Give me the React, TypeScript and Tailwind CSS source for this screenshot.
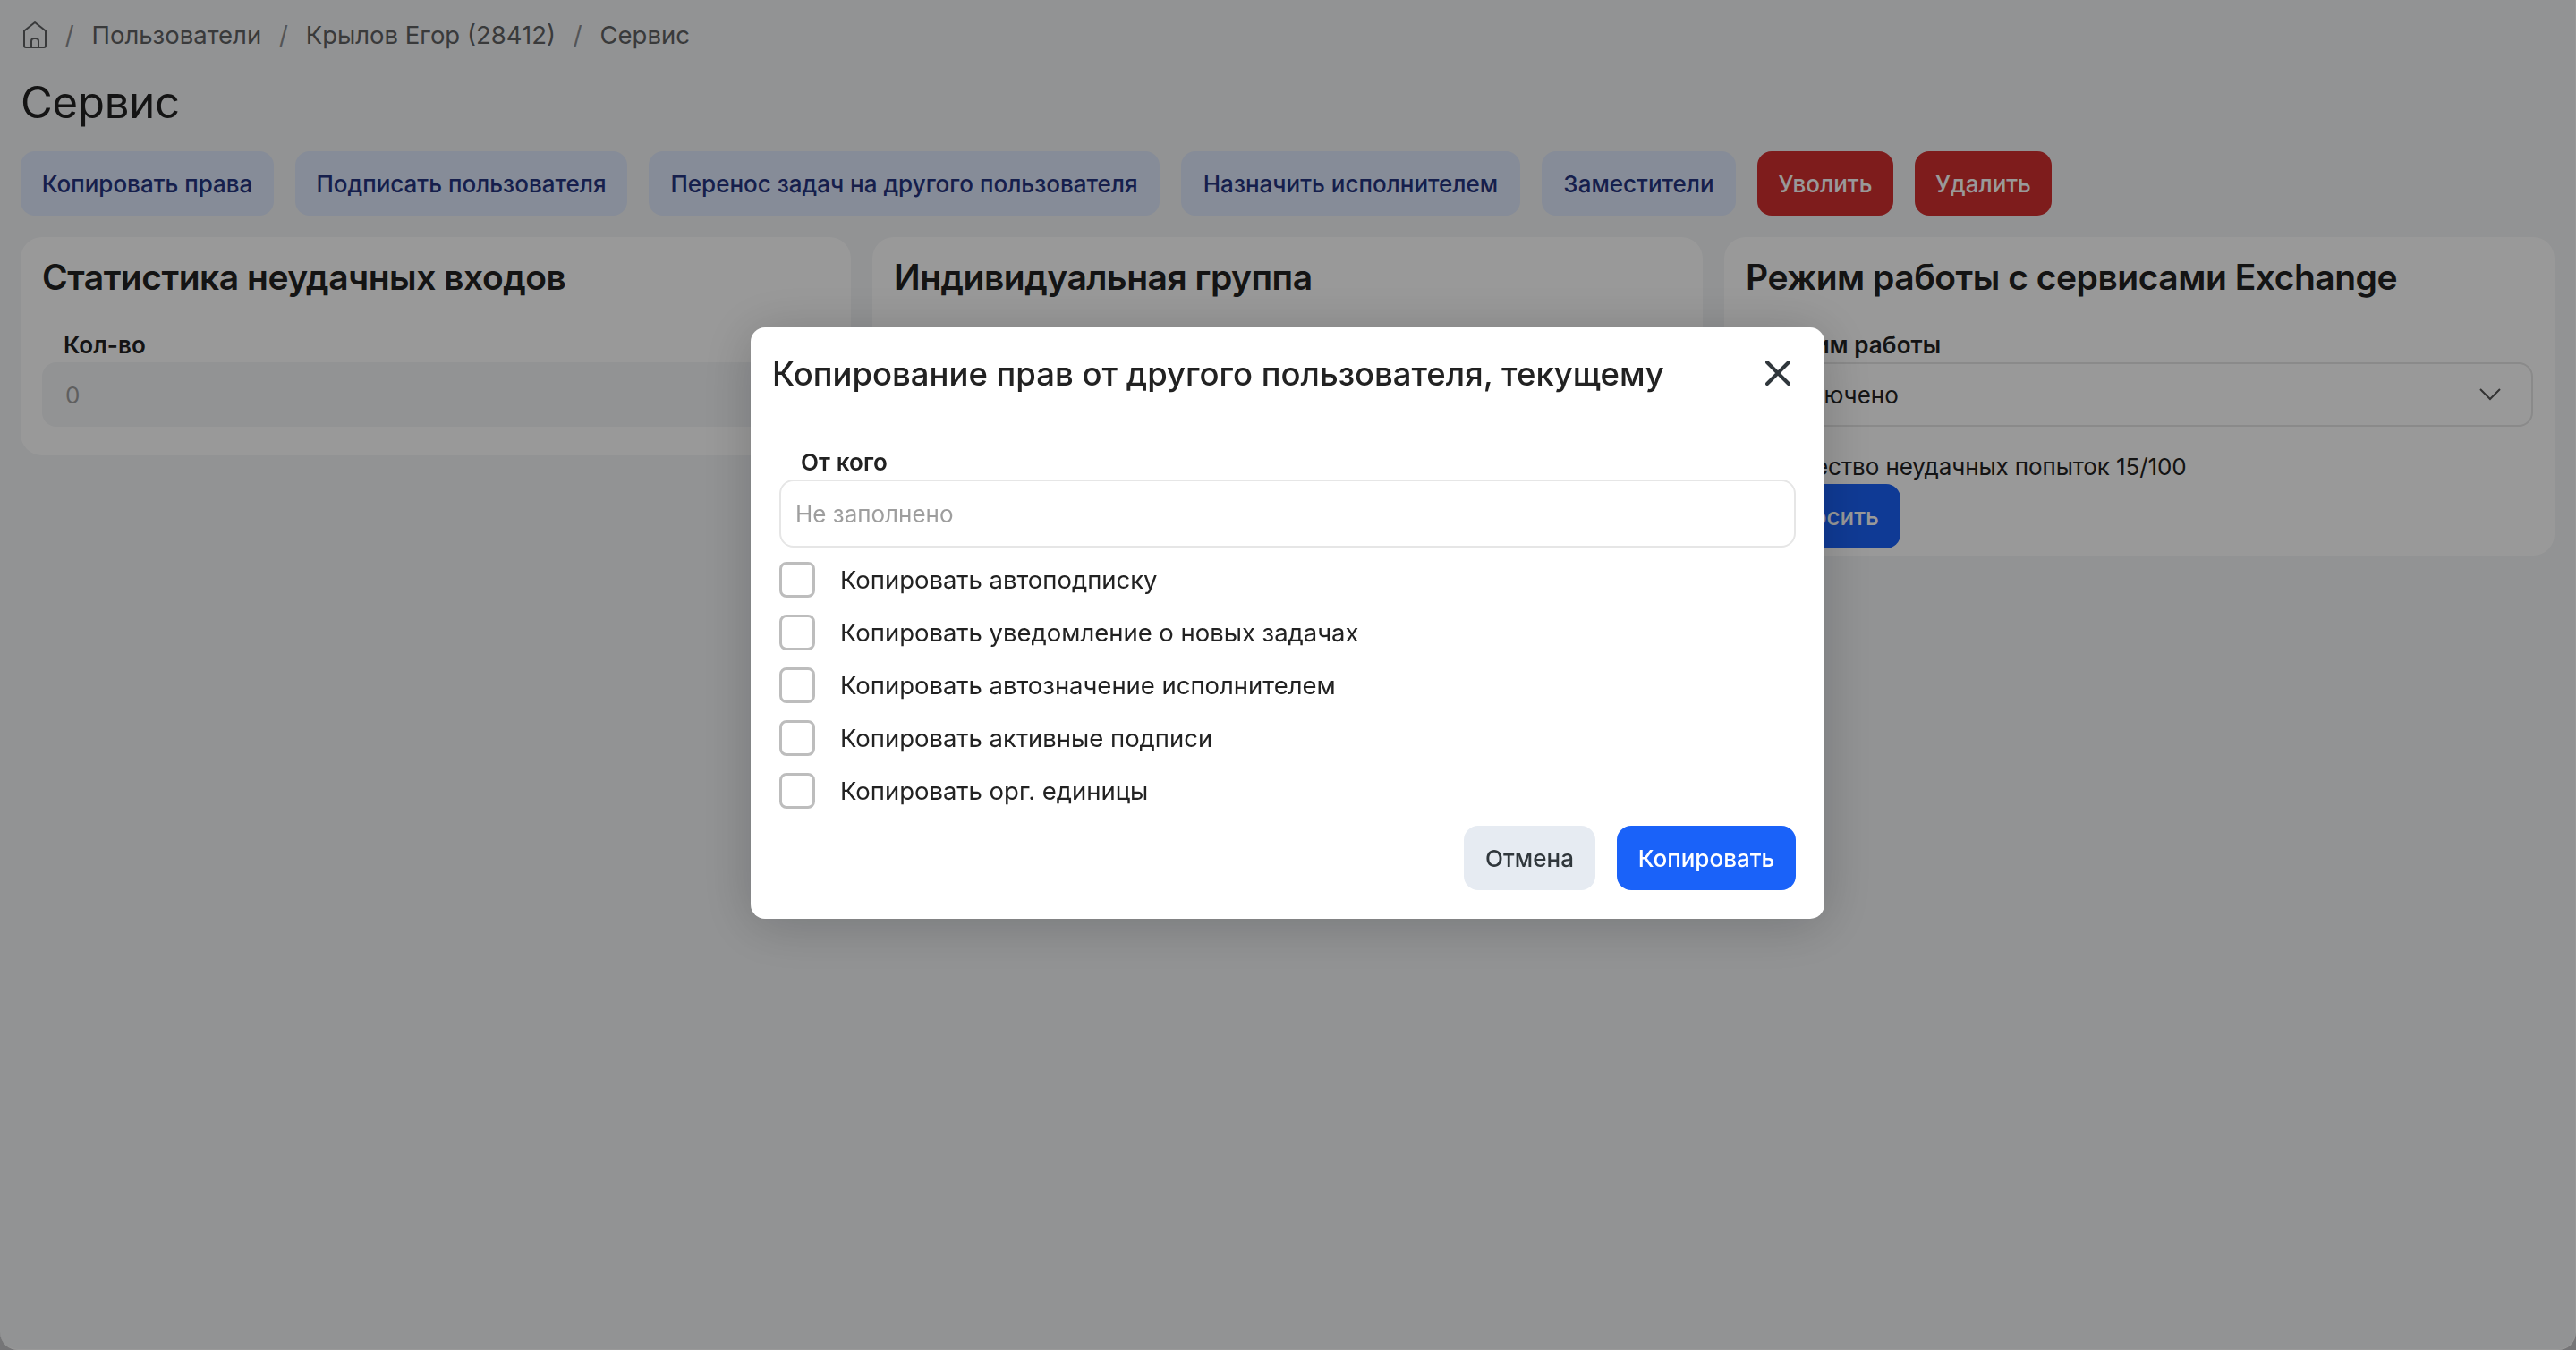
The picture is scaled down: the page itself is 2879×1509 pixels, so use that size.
import type { ReactNode } from "react";
import { clsx } from "clsx";

const crumbs = ["Пользователи", "Крылов Егор (28412)", "Сервис"];

const actions = [
  { label: "Копировать права", width: "w-[283px]" },
  { label: "Подписать пользователя", width: "w-[371px]" },
  { label: "Перенос задач на другого пользователя", width: "w-[571px]" },
  { label: "Назначить исполнителем", width: "w-[379px]" },
  { label: "Заместители", width: "w-[217px]" },
  { label: "Уволить", width: "w-[152px]", danger: true },
  { label: "Удалить", width: "w-[153px]", danger: true },
];

const copyOptions = [
  "Копировать автоподписку",
  "Копировать уведомление о новых задачах",
  "Копировать автозначение исполнителем",
  "Копировать активные подписи",
  "Копировать орг. единицы",
];

function HomeIcon() {
  return (
    <svg width="28" height="32" viewBox="0 0 28 32" fill="none" stroke="#5f6163" strokeWidth="2" strokeLinejoin="round">
      <path d="M2 11.500 14 2l12 9.500V28a2 2 0 0 1-2 2H4a2 2 0 0 1-2-2Z" />
      <path d="M10 30v-7a3 3 0 0 1 3-3h2a3 3 0 0 1 3 3v7" />
    </svg>
  );
}

function Button({
  children,
  className = "",
}: {
  children: ReactNode;
  className?: string;
}) {
  return (
    <button
      type="button"
      className={clsx(
        "flex h-[72px] items-center justify-center rounded-2xl text-[26px] font-medium whitespace-nowrap",
        className,
      )}
    >
      {children}
    </button>
  );
}

function FieldLabel({ children }: { children: ReactNode }) {
  return <div className="pl-6 text-[26px] leading-[38px] font-semibold tracking-[0.1px]">{children}</div>;
}

function Card({ title, className = "", children }: { title: string; className?: string; children?: ReactNode }) {
  return (
    <section className={clsx("rounded-3xl bg-white px-6 pt-[21px]", className)}>
      <h2 className="mb-[33px] text-[39px] leading-[48px] font-semibold tracking-[-0.48px] whitespace-nowrap">
        {title}
      </h2>
      {children}
    </section>
  );
}

function Breadcrumbs() {
  return (
    <nav className="flex h-[78px] items-center pl-0.5 text-[27.5px] text-[#5f6163]">
      <HomeIcon />
      {crumbs.map((crumb) => (
        <span key={crumb} className="flex items-center pt-0.5">
          <span className="mx-[19.8px] text-[#8b8d8f]">/</span>
          {crumb}
        </span>
      ))}
    </nav>
  );
}

function ServicePage() {
  return (
    <div className="h-full w-[2879px] pr-6 pl-[23px]">
      <Breadcrumbs />
      <h1 className="h-[91px] text-[49px] leading-[74px] tracking-[-0.2px]">Сервис</h1>
      <div className="flex gap-6">
        {actions.map(({ label, width, danger }) => (
          <Button
            key={label}
            className={clsx(width, danger ? "bg-[#d32f2f] text-white" : "bg-[#dfe9fd] text-[#26347f]")}
          >
            {label}
          </Button>
        ))}
      </div>
      <div className="mt-6 flex items-start gap-6">
        <Card title="Статистика неудачных входов" className="h-[244px] flex-1">
          <FieldLabel>Кол-во</FieldLabel>
          <div className="flex h-[72px] items-center rounded-2xl bg-[#f3f5f7] px-[26px] pt-px text-[26px] text-[#9e9e9e]">
            0
          </div>
        </Card>
        <Card title="Индивидуальная группа" className="h-[244px] flex-1" />
        <Card title="Режим работы с сервисами Exchange" className="h-[356px] flex-1">
          <FieldLabel>Режим работы</FieldLabel>
          <div className="flex h-[72px] items-center justify-between rounded-2xl border-2 border-[#e6e6e6] pr-[34px] pl-6 text-[26px]">
            Отключено
            <svg width="24" height="14" viewBox="0 0 24 14" fill="none" stroke="#555" strokeWidth="2">
              <path d="m1 1 11 11L23 1" />
            </svg>
          </div>
          <div className="mt-[26px] text-[26px] leading-[38px] tracking-[-0.1px]">
            Количество неудачных попыток 15/100
          </div>
          <Button className="w-[173px] bg-[#1a62f9] text-white">Сбросить</Button>
        </Card>
      </div>
    </div>
  );
}

function CopyRightsDialog() {
  return (
    <div
      role="dialog"
      className="h-[661px] w-[1200px] rounded-2xl bg-white px-6 shadow-[0_6px_60px_rgba(0,0,0,0.2)]"
    >
      <div className="flex h-[102px] items-center justify-between pr-[14px]">
        <h2 className="pt-0.5 text-[36.5px] font-medium whitespace-nowrap">
          Копирование прав от другого пользователя, текущему
        </h2>
        <svg width="28" height="28" viewBox="0 0 28 28" fill="none" stroke="#30373c" strokeWidth="4" strokeLinecap="round">
          <path d="m2 2 24 24M26 2 2 26" />
        </svg>
      </div>
      <div className="px-2 pt-[30px]">
        <FieldLabel>От кого</FieldLabel>
        <div className="flex h-[76px] items-center rounded-2xl border-2 border-[#e6e6e6] px-4 text-[26px] text-[#9e9e9e]">
          Не заполнено
        </div>
        <div className="mt-4 flex flex-col gap-[19px]">
          {copyOptions.map((option) => (
            <label key={option} className="flex h-10 items-center gap-7 text-[27.5px] tracking-[-0.03px]">
              <span className="size-10 rounded-lg border-3 border-[#bdbdbd]" />
              <span className="pt-0.5">{option}</span>
            </label>
          ))}
        </div>
        <div className="mt-[19px] flex justify-end gap-6">
          <Button className="w-[147px] bg-[#e6ebf2] text-[#30373c]">Отмена</Button>
          <Button className="w-[200px] bg-[#1a62f9] text-white">Копировать</Button>
        </div>
      </div>
    </div>
  );
}

export default function App() {
  return (
    <div className="h-screen overflow-hidden bg-[#c4c4c6] font-['Inter',sans-serif] text-[#222]">
      <div className="h-full overflow-hidden rounded-b-[20px] border-r border-b border-white bg-[#f3f5f7]">
        <ServicePage />
      </div>
      <div className="fixed inset-0 flex items-start justify-center bg-black/40 pt-[366px] pr-px">
        <CopyRightsDialog />
      </div>
    </div>
  );
}
